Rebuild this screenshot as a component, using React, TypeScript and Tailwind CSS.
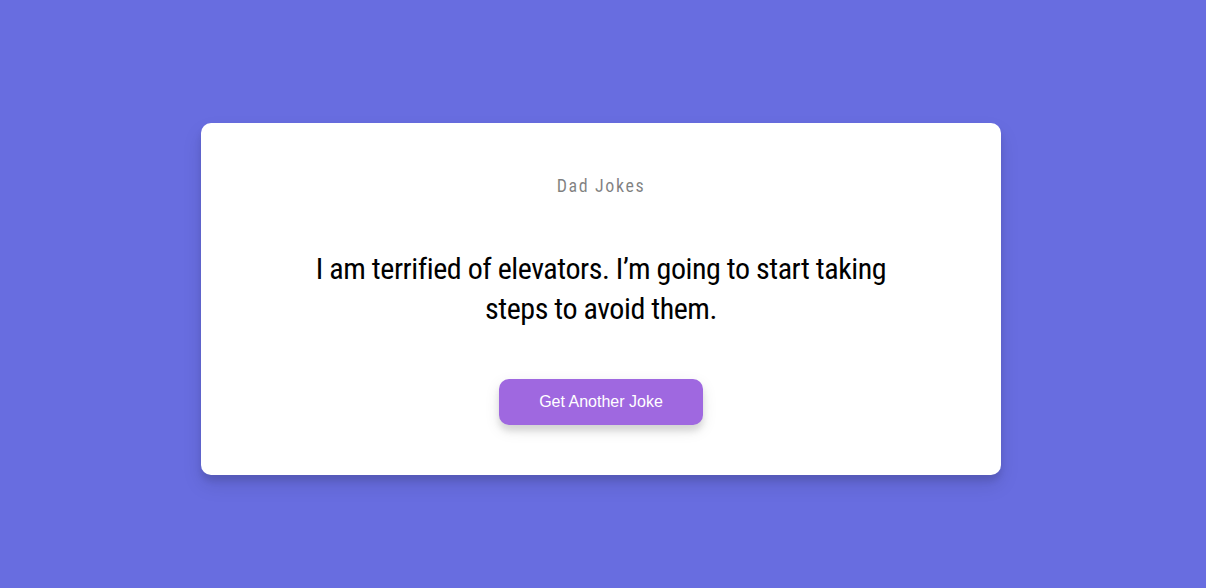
export default function App() {
  return (
    <div className="min-h-screen bg-[#686de0] flex justify-center items-start pt-[123px] pr-1">
      <div className="w-[800px] bg-white rounded-[10px] px-5 py-[50px] text-center shadow-[0_10px_20px_rgba(0,0,0,0.1),0_6px_6px_rgba(0,0,0,0.1)]">
        <h3 className="m-0 h-[26px] leading-[26px] font-['Roboto_Condensed','DejaVu_Sans_Condensed',sans-serif] text-[18px] font-normal tracking-[1.6px] text-black/50">
          Dad Jokes
        </h3>
        <div className="mx-auto my-[50px] max-w-[600px] font-['Roboto_Condensed','DejaVu_Sans_Condensed',sans-serif] text-[30px] leading-[40px] tracking-[-0.45px] text-black">
          I am terrified of elevators. I’m going to start taking steps to avoid them.
        </div>
        <button className="bg-[#9f68e0] text-white rounded-[10px] px-10 py-[14px] font-['Liberation_Sans',Arial,sans-serif] text-base leading-[18px] cursor-pointer shadow-[0_5px_15px_rgba(0,0,0,0.1),0_6px_6px_rgba(0,0,0,0.1)]">
          Get Another Joke
        </button>
      </div>
    </div>
  );
}
